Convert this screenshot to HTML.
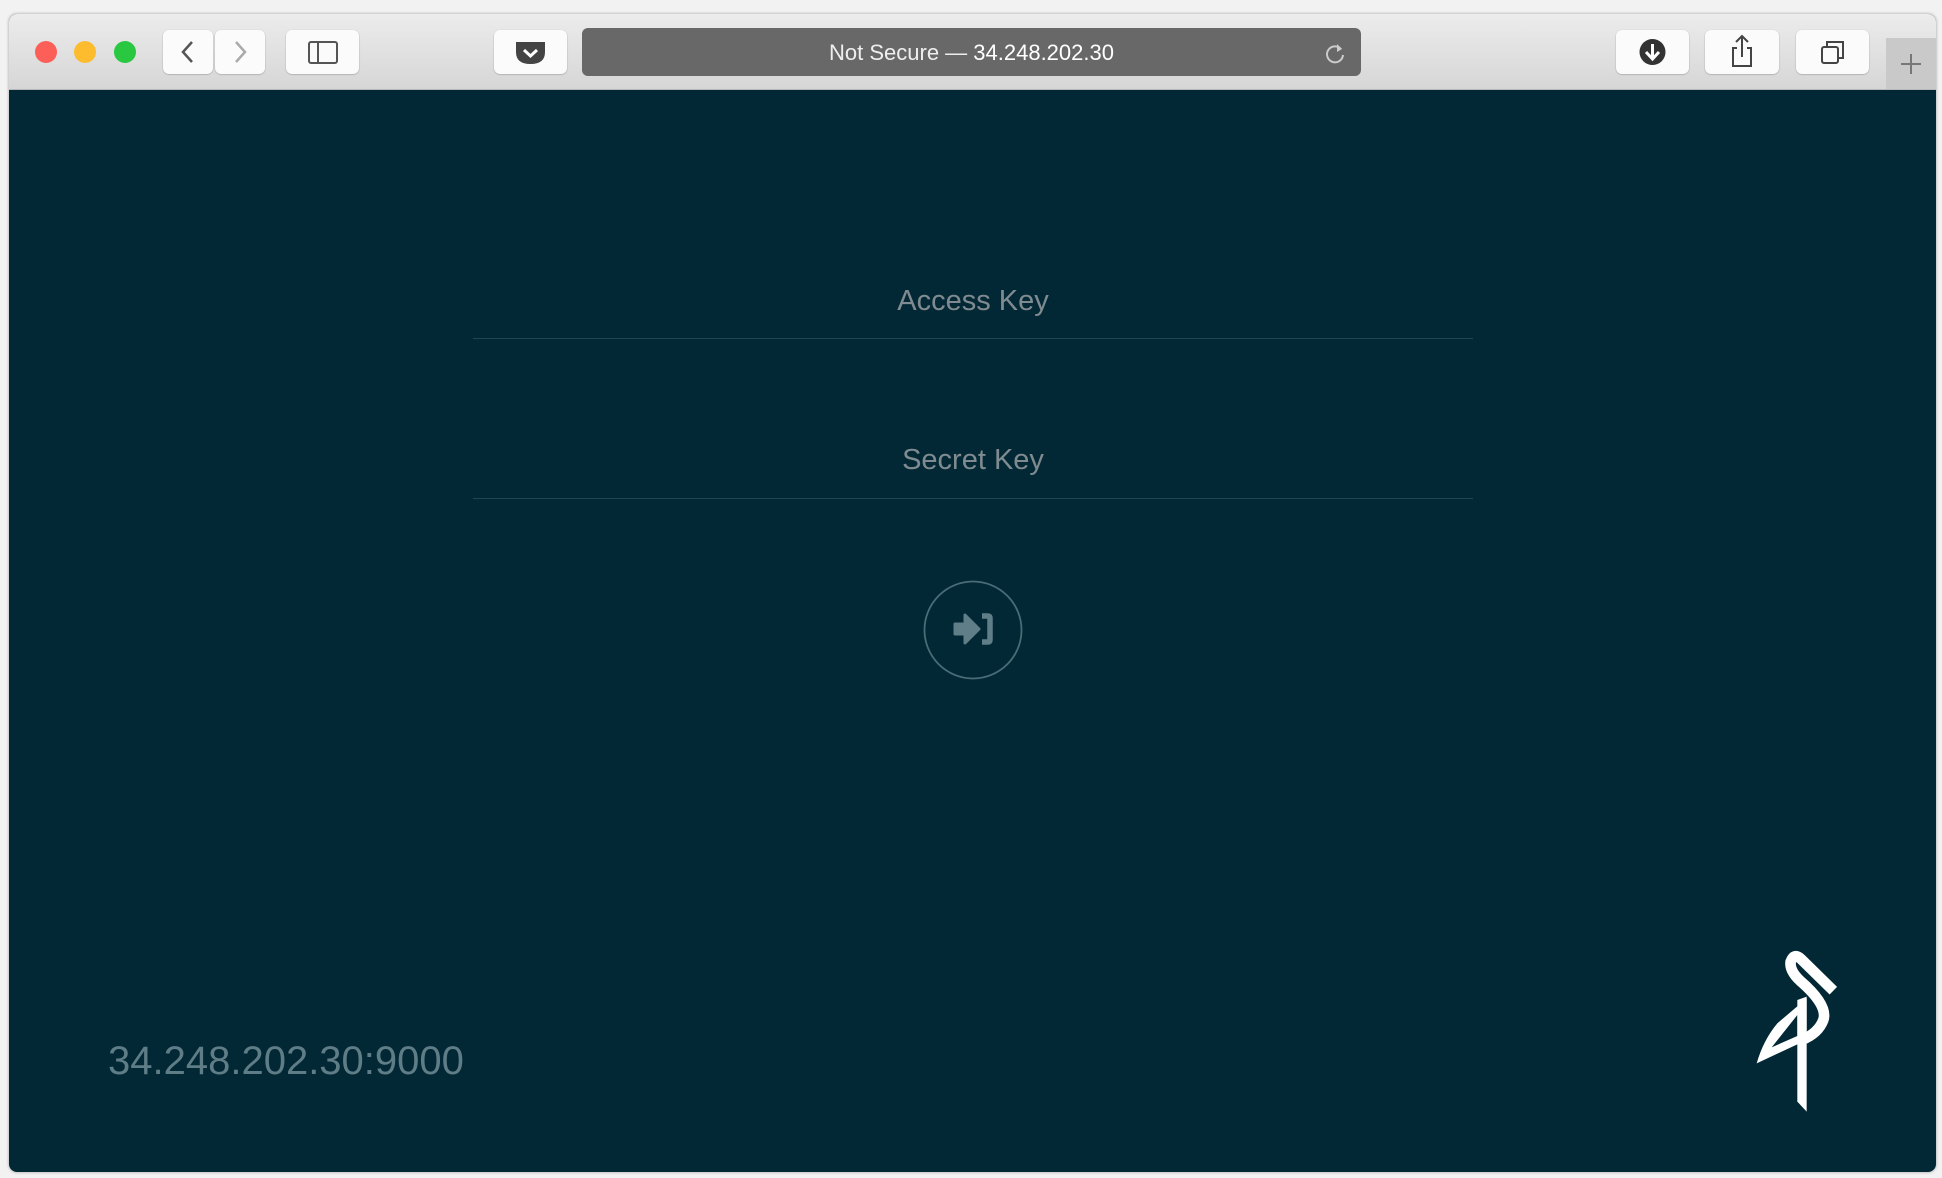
<!DOCTYPE html>
<html><head><meta charset="utf-8"><style>
html,body{margin:0;padding:0;width:1942px;height:1178px;overflow:hidden;background:#f2f2f2;font-family:"Liberation Sans",sans-serif;}
.win{position:absolute;left:9px;top:14px;width:1927px;height:1158px;border-radius:8px;overflow:hidden;background:#022835;box-shadow:0 0 3px rgba(0,0,0,.35);}
.tb{position:absolute;left:0;top:0;width:1927px;height:75px;background:linear-gradient(#ececec,#d6d6d6);border-bottom:1px solid #b8b8b8;}
.dot{position:absolute;top:27px;width:22px;height:22px;border-radius:50%;}
.btn{position:absolute;top:16px;height:44px;background:#fbfbfb;border-radius:6px;box-shadow:0 0.5px 1.5px rgba(0,0,0,.3);}
.url{position:absolute;left:573px;top:14px;width:779px;height:48px;background:#686868;border-radius:6px;color:#eee;font-size:22px;line-height:50px;text-align:center;}
.ph{position:absolute;left:473px;width:1000px;text-align:center;color:#7f8b90;font-size:29px;}
.ln{position:absolute;left:473px;width:1000px;height:1px;background:#1f4652;}
</style></head><body>
<div class="win">
 <div class="tb">
  <div class="dot" style="left:26px;background:#fc5f57;"></div>
  <div class="dot" style="left:65px;background:#fdbc2e;"></div>
  <div class="dot" style="left:105px;background:#29c840;"></div>
  <div class="btn" style="left:154px;width:50px;"><svg width="50" height="44"><path d="M29 12 L20 22 L29 32" stroke="#555" stroke-width="2.5" fill="none"/></svg></div>
  <div class="btn" style="left:206px;width:50px;"><svg width="50" height="44"><path d="M21 12 L30 22 L21 32" stroke="#aaa" stroke-width="2.5" fill="none"/></svg></div>
  <div class="btn" style="left:277px;width:73px;"><svg width="73" height="44"><rect x="23" y="12" width="28" height="21" rx="2" stroke="#555" stroke-width="2" fill="none"/><path d="M32 12 V33" stroke="#555" stroke-width="2"/></svg></div>
  <div class="btn" style="left:485px;width:73px;"><svg width="73" height="44"><path d="M22 12 H51 V22 Q51 34 36.5 34 Q22 34 22 22 Z" fill="#444"/><path d="M30 20 L36.5 26 L43 20" stroke="#fff" stroke-width="3" fill="none"/></svg></div>
  <div class="url">Not Secure — <span style="color:#fff">34.248.202.30</span>
   <svg style="position:absolute;right:14px;top:13px" width="24" height="24"><path d="M18 8 A8 8 0 1 0 20 14" stroke="#ccc" stroke-width="2" fill="none"/><path d="M14 3 L19 8 L14 11" fill="#ccc"/></svg></div>
  <div class="btn" style="left:1607px;width:73px;"><svg width="73" height="44"><circle cx="36.5" cy="22" r="13" fill="#333"/><path d="M36.5 14 V28 M30 22 L36.5 29 L43 22" stroke="#fff" stroke-width="3" fill="none"/></svg></div>
  <div class="btn" style="left:1696px;width:74px;"><svg width="74" height="44"><path d="M32 18 H28 V36 H46 V18 H42" stroke="#444" stroke-width="2" fill="none"/><path d="M37 27 V6 M31 12 L37 6 L43 12" stroke="#444" stroke-width="2" fill="none"/></svg></div>
  <div class="btn" style="left:1787px;width:73px;"><svg width="73" height="44"><rect x="26" y="17" width="16" height="16" rx="2" stroke="#444" stroke-width="2" fill="none"/><path d="M31 17 V12 H47 V28 H42" stroke="#444" stroke-width="2" fill="none"/></svg></div>
  <div style="position:absolute;left:1877px;top:24px;width:50px;height:51px;background:#c9c9c9;"><svg width="50" height="51"><path d="M25 16 V36 M15 26 H35" stroke="#777" stroke-width="2"/></svg></div>
 </div>
</div>
<div class="ph" style="top:285px;">Access Key</div>
<div class="ln" style="top:338px;"></div>
<div class="ph" style="top:444px;">Secret Key</div>
<div class="ln" style="top:498px;"></div>
<svg style="position:absolute;left:922px;top:579px" width="102" height="102">
 <circle cx="51" cy="51" r="48.5" stroke="#4a6c76" stroke-width="1.8" fill="none"/>
 <path d="M33 45 H43 V36 L57 50 L43 64 V55 H33 Z" fill="#5f7e88" stroke="#5f7e88" stroke-width="3" stroke-linejoin="round"/>
 <path d="M60 37 H66 Q68 37 68 39 V61 Q68 63 66 63 H60" stroke="#5f7e88" stroke-width="5.5" fill="none"/>
</svg>
<div style="position:absolute;left:108px;top:1039px;color:#5f7d87;font-size:40px;">34.248.202.30:9000</div>
<svg style="position:absolute;left:1700px;top:930px" width="242" height="248" viewBox="0 0 726 744">
 <path d="M400 182 L302 86 Q282 68 272 95 Q268 122 300 152 Q385 225 370 270 Q355 310 305 330" stroke="#fff" stroke-width="32" fill="none"/>
 <polygon points="292,210 320,200 320,545 292,515" fill="#fff"/>
 <path d="M320 205 L232 280 Q190 330 170 400 L320 330 Z M292 255 L215 352 L292 318 Z" fill="#fff" fill-rule="evenodd"/>
</svg>
</body></html>
